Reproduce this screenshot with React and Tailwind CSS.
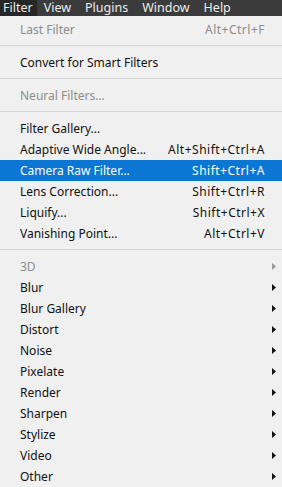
import React from 'react';

const menuBar = ['Filter', 'View', 'Plugins', 'Window', 'Help'];

const items = [
  { label: 'Last Filter', shortcut: 'Alt+Ctrl+F', disabled: true },
  { sep: true },
  { label: 'Convert for Smart Filters' },
  { sep: true },
  { label: 'Neural Filters...', disabled: true },
  { sep: true },
  { label: 'Filter Gallery...' },
  { label: 'Adaptive Wide Angle...', shortcut: 'Alt+Shift+Ctrl+A' },
  { label: 'Camera Raw Filter...', shortcut: 'Shift+Ctrl+A', active: true },
  { label: 'Lens Correction...', shortcut: 'Shift+Ctrl+R' },
  { label: 'Liquify...', shortcut: 'Shift+Ctrl+X' },
  { label: 'Vanishing Point...', shortcut: 'Alt+Ctrl+V' },
  { sep: true },
  { label: '3D', sub: true, disabled: true },
  { label: 'Blur', sub: true },
  { label: 'Blur Gallery', sub: true },
  { label: 'Distort', sub: true },
  { label: 'Noise', sub: true },
  { label: 'Pixelate', sub: true },
  { label: 'Render', sub: true },
  { label: 'Sharpen', sub: true },
  { label: 'Stylize', sub: true },
  { label: 'Video', sub: true },
  { label: 'Other', sub: true },
];

const Arrow = ({ className }) => (
  <svg width="4" height="7" viewBox="0 0 4 7" className={className}>
    <path d="M0 0 L4 3.5 L0 7 Z" fill="currentColor" />
  </svg>
);

const MenuRow = ({ item }) => {
  if (item.sep) {
    return (
      <div className="h-[12px] pt-[5px]">
        <div className="h-px bg-[#d5d5d5]" />
      </div>
    );
  }

  const color = item.active
    ? 'bg-[#0b76d3] text-white'
    : item.disabled
      ? 'text-[#8d8d8d]'
      : 'text-[#111111]';

  return (
    <div className={`h-[21px] flex items-center pl-[20px] pr-[17px] relative ${color}`}>
      <span className="flex-1 whitespace-nowrap">{item.label}</span>
      {item.shortcut && <span className="whitespace-nowrap tracking-[0.5px]">{item.shortcut}</span>}
      {item.sub && (
        <Arrow className={`absolute right-[6px] top-[7px] ${item.disabled ? 'text-[#9a9a9a]' : 'text-[#111111]'}`} />
      )}
    </div>
  );
};

export default function App() {
  return (
    <div className="w-[282px] h-[487px] overflow-hidden bg-[#f0f0f0] font-['Noto_Sans',sans-serif] text-[12px]">
      <div className="h-[16px] bg-[#3b3b3b] flex text-[12.5px] leading-[16px] text-[#ececec]">
        {menuBar.map((m, i) => (
          <div
            key={m}
            className={`h-full whitespace-nowrap ${i === 0 ? 'bg-[#262626] pl-[3px] pr-[4px]' : 'px-[7px]'}`}
          >
            {m}
          </div>
        ))}
      </div>
      <div className="pt-[3px]">
        {items.map((item, i) => (
          <MenuRow key={i} item={item} />
        ))}
      </div>
    </div>
  );
}
